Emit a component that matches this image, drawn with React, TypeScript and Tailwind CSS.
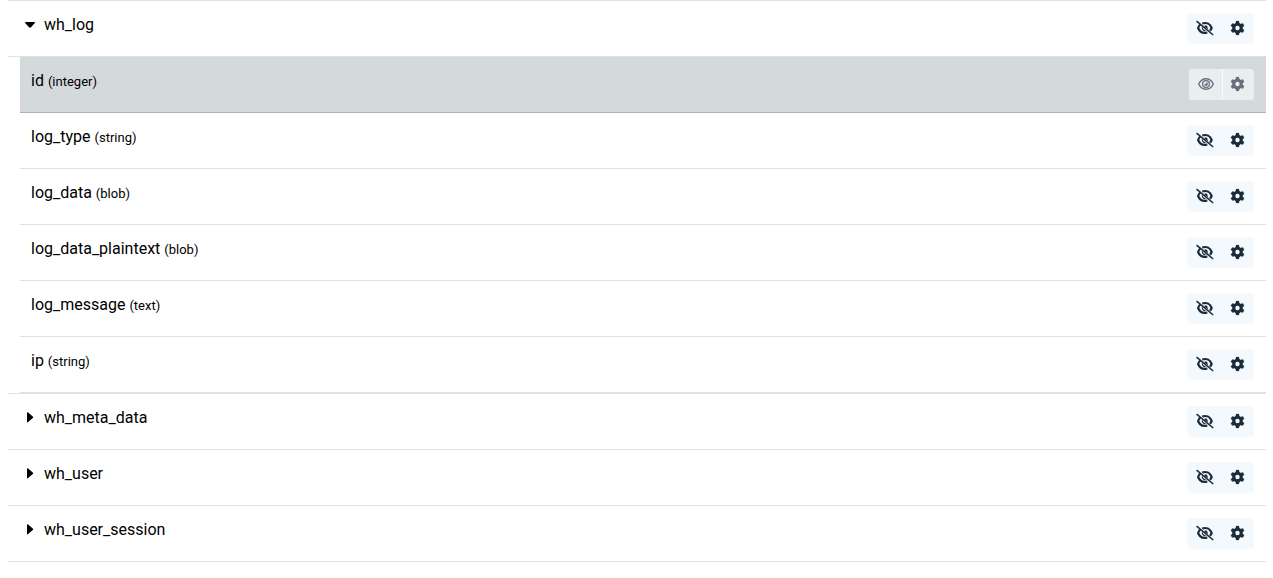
import { useState } from "react";
import clsx from "clsx";

type Column = { name: string; type: string; locked?: boolean };
type DbTable = { name: string; columns: Column[] };

const tables: DbTable[] = [
  {
    name: "wh_log",
    columns: [
      { name: "id", type: "integer", locked: true },
      { name: "log_type", type: "string" },
      { name: "log_data", type: "blob" },
      { name: "log_data_plaintext", type: "blob" },
      { name: "log_message", type: "text" },
      { name: "ip", type: "string" },
    ],
  },
  { name: "wh_meta_data", columns: [] },
  { name: "wh_user", columns: [] },
  { name: "wh_user_session", columns: [] },
];

function EyeIcon() {
  return (
    <svg width="16" height="16" viewBox="0 0 16 16" fill="none" stroke="currentColor" aria-hidden="true">
      <path d="M.7 8C2.3 4.500 4.900 2.700 8 2.700s5.700 1.800 7.300 5.300c-1.600 3.500-4.200 5.300-7.300 5.300S2.300 11.500.7 8z" strokeWidth="1.400" />
      <circle cx="8" cy="8" r="3.400" strokeWidth="1.300" />
      <path d="M8.500 6A2 2 0 1 1 6 8.500 2.500 2.500 0 0 0 8.500 6z" fill="currentColor" stroke="none" />
    </svg>
  );
}

function EyeSlashIcon() {
  return (
    <svg width="18" height="16" viewBox="0 0 18 16" fill="none" stroke="currentColor" aria-hidden="true">
      <path d="M6.200 3.500C10.800 2 14.300 4.200 15.700 8c-.5 1.200-1 2-1.800 2.800" strokeWidth="2.200" />
      <path d="M4.300 4.700C3.200 5.500 2.600 6.600 2.100 8c1.600 3.900 5.100 5.700 9.200 4.500" strokeWidth="2.200" />
      <path d="M8.800 5.200a2.800 2.800 0 0 1 2.700 4L8.300 6.500z" fill="currentColor" stroke="none" />
      <path d="M6.300 7.400a2.800 2.800 0 0 0 3.300 3.100" strokeWidth="1.200" />
      <path d="M.6 1.200 17.200 15" strokeWidth="1.600" />
    </svg>
  );
}

function GearIcon() {
  return (
    <svg width="15" height="16" viewBox="-7.5 -8 15 16" fill="none" stroke="currentColor" aria-hidden="true">
      <circle r="3.700" strokeWidth="3" />
      {[0, 60, 120, 180, 240, 300].map((angle) => (
        <path
          key={angle}
          d="M-1.300-6.900h2.600l.7 3h-4z"
          fill="currentColor"
          strokeWidth=".3"
          transform={`rotate(${angle})`}
        />
      ))}
    </svg>
  );
}

function Caret({ open }: { open: boolean }) {
  return (
    <svg width="12" height="12" viewBox="0 0 12 12" fill="currentColor" aria-hidden="true">
      {open ? (
        <path d="M1.500 3h9q1 .3.300 1.100L7 8.200q-1 .9-2 0L1.200 4.100Q.5 3.300 1.500 3z" />
      ) : (
        <path d="M3 .8q.3-1 1.100-.3l4.700 4q.9.800 0 1.600l-4.700 4q-.8.700-1.100-.3z" />
      )}
    </svg>
  );
}

function RowActions({ name, locked }: { name: string; locked?: boolean }) {
  const button = clsx(
    "flex h-[31px] items-center justify-center pb-px",
    locked ? "bg-[#e9eef1] text-[#66717d]" : "bg-[#f4f9fd] text-[#1d2b3c]",
  );

  return (
    <div className={clsx("flex shrink-0", locked && "gap-px rounded bg-[#f7fafc]")}>
      <button
        type="button"
        disabled={locked}
        aria-label={`Toggle visibility of ${name}`}
        className={clsx(button, "rounded-l", locked ? "w-[33px]" : "w-9")}
      >
        {locked ? <EyeIcon /> : <EyeSlashIcon />}
      </button>
      <button
        type="button"
        disabled={locked}
        aria-label={`Settings for ${name}`}
        className={clsx(button, "w-[31px] rounded-r pr-0.5")}
      >
        <GearIcon />
      </button>
    </div>
  );
}

function ColumnRow({ column }: { column: Column }) {
  return (
    <li
      className={clsx(
        "flex h-14 items-start justify-between border-b py-3 pr-3 pl-[11px]",
        column.locked ? "border-[#acb3b7] bg-[#d4d9dc]" : "border-[#dee2e6]",
      )}
    >
      <div className="leading-6">
        {column.name} <span className="text-[13px]">({column.type})</span>
      </div>
      <RowActions name={column.name} locked={column.locked} />
    </li>
  );
}

function TableItem({ table, defaultOpen }: { table: DbTable; defaultOpen: boolean }) {
  const [open, setOpen] = useState(defaultOpen);

  return (
    <li className="border-b border-[#dee2e6]">
      <div className={clsx("flex items-start justify-between py-3 pr-3 pl-4", open && "border-b border-[#dee2e6]")}>
        <button
          type="button"
          aria-expanded={open}
          onClick={() => setOpen(!open)}
          className="flex items-center gap-2 leading-6"
        >
          <Caret open={open} />
          {table.name}
        </button>
        <RowActions name={table.name} />
      </div>
      {open && table.columns.length > 0 && (
        <ul className="pl-3">
          {table.columns.map((column) => (
            <ColumnRow key={column.name} column={column} />
          ))}
        </ul>
      )}
    </li>
  );
}

export default function App() {
  return (
    <main className="bg-white pr-[7px] pl-2 font-['Roboto',sans-serif] text-base text-black">
      <ul className="border-t border-[#dee2e6]">
        {tables.map((table, index) => (
          <TableItem key={table.name} table={table} defaultOpen={index === 0} />
        ))}
      </ul>
    </main>
  );
}
